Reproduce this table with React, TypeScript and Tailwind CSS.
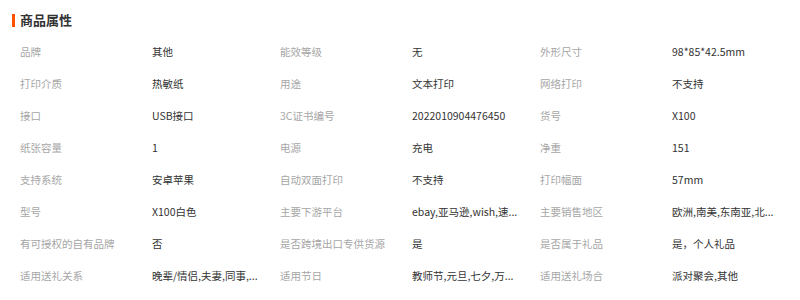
import React from "react";

const rows: [string, string][][] = [
  [["品牌", "其他"], ["能效等级", "无"], ["外形尺寸", "98*85*42.5mm"]],
  [["打印介质", "热敏纸"], ["用途", "文本打印"], ["网络打印", "不支持"]],
  [["接口", "USB接口"], ["3C证书编号", "2022010904476450"], ["货号", "X100"]],
  [["纸张容量", "1"], ["电源", "充电"], ["净重", "151"]],
  [["支持系统", "安卓苹果"], ["自动双面打印", "不支持"], ["打印幅面", "57mm"]],
  [["型号", "X100白色"], ["主要下游平台", "ebay,亚马逊,wish,速..."], ["主要销售地区", "欧洲,南美,东南亚,北..."]],
  [["有可授权的自有品牌", "否"], ["是否跨境出口专供货源", "是"], ["是否属于礼品", "是，个人礼品"]],
  [["适用送礼关系", "晚辈/情侣,夫妻,同事,..."], ["适用节日", "教师节,元旦,七夕,万..."], ["适用送礼场合", "派对聚会,其他"]],
];

export default function App() {
  return (
    <div
      className="w-[800px] h-[300px] bg-white overflow-hidden"
      style={{ fontFamily: '"Noto Sans CJK SC", "Noto Sans", sans-serif' }}
    >
      <div className="h-[36px] flex items-center pl-[12px] pt-[4px]">
        <div className="w-[3px] h-[13px] bg-[#ff5000] mr-[5px]" />
        <div className="text-[13px] font-bold text-[#333] leading-[18px]">商品属性</div>
      </div>
      <div className="pl-[20px] flex flex-col">
        {rows.map((r, i) => (
          <div key={i} className="flex h-[32px] items-center">
            {r.map(([k, v], j) => (
              <div key={j} className="flex w-[260.5px] items-center text-[10.5px] leading-[16px]">
                <div className="w-[132px] text-[#a6a6a6] whitespace-nowrap">{k}</div>
                <div className="w-[120px] text-[#333] whitespace-nowrap">{v}</div>
              </div>
            ))}
          </div>
        ))}
      </div>
    </div>
  );
}
